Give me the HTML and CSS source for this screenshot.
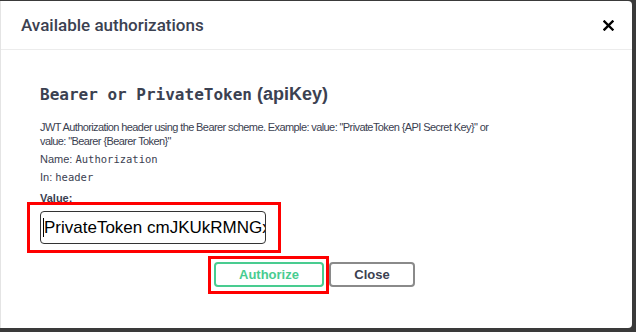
FILE: index.html
```html
<!DOCTYPE html>
<html>
<head>
<meta charset="utf-8">
<link rel="stylesheet" href="styles.css">
</head>
<body>
<div class="modal">
  <div class="modal-header">
    <h3 class="modal-title">Available authorizations</h3>
    <button class="close-x" aria-label="close">
      <svg width="11" height="11" viewBox="0 0 11 11"><path d="M1.5 1.5 L9.5 9.5 M9.5 1.5 L1.5 9.5" stroke="#000" stroke-width="2.4" stroke-linecap="square"/></svg>
    </button>
  </div>
  <div class="modal-body">
    <h4 class="auth-title"><code>Bearer or PrivateToken</code> (apiKey)</h4>
    <p class="desc">JWT Authorization header using the Bearer scheme. Example: value: "PrivateToken {API Secret Key}" or value: "Bearer {Bearer Token}"</p>
    <p class="meta">Name: <code>Authorization</code></p>
    <p class="meta">In: <code>header</code></p>
    <label class="value-label" for="token">Value:</label>
    <div class="hl input-hl">
      <div class="input-wrap"><span class="caret"></span><input id="token" class="input" type="text" value="PrivateToken cmJKUkRMNGxWZ3VqZXNhZQ"></div>
    </div>
    <div class="actions">
      <div class="hl btn-hl"><button class="btn authorize">Authorize</button></div>
      <button class="btn close">Close</button>
    </div>
  </div>
</div>
</body>
</html>
```
FILE: styles.css
```css
html, body { margin: 0; padding: 0; }
body {
  background: #3a3a3a;
  width: 636px;
  height: 332px;
  overflow: hidden;
  font-family: "Liberation Sans", Arial, sans-serif;
  color: #3b4151;
}
.modal {
  margin-top: 1px;
  width: 632px;
  height: 327px;
  background: #fff;
  border-left: 1px solid #e4e4e4;
  border-radius: 0 4px 4px 0;
  box-sizing: border-box;
}
.modal-header {
  height: 48px;
  border-bottom: 1px solid #ececec;
  display: flex;
  align-items: center;
  justify-content: space-between;
  padding: 0 18px 0 20px;
}
.modal-title {
  margin: 0;
  font-family: Roboto, "Liberation Sans", sans-serif;
  font-size: 17px;
  font-weight: 500;
  color: #3b4151;
}
.close-x {
  border: 0;
  background: none;
  padding: 0;
  display: flex;
}
.modal-body {
  padding: 34px 0 0 39px;
}
.auth-title {
  margin: 0;
  font-size: 18px;
  font-weight: bold;
  line-height: 20px;
  font-family: "Liberation Sans", Arial, sans-serif;
  color: #3b4151;
}
.auth-title code {
  font-family: "DejaVu Sans Mono", monospace;
  font-size: 16px;
}
.desc {
  margin: 15px 0 0;
  font-size: 11px;
  line-height: 14px;
  width: 470px;
  letter-spacing: -0.6px;
}
.meta {
  margin: 3px 0 0;
  font-size: 11px;
  line-height: 16px;
}
.meta + .meta {
  margin-top: 2px;
}
.meta code {
  font-family: "DejaVu Sans Mono", monospace;
  font-size: 10.5px;
}
.value-label {
  display: block;
  margin-top: 6px;
  font-size: 11px;
  font-weight: bold;
  line-height: 14px;
}
.hl {
  border: 3px solid #f00;
  display: inline-block;
}
.input-hl {
  margin: -3px 0 0 -13px;
  padding: 6px 12px 6px 10px;
}
.input-wrap {
  position: relative;
  width: 226px;
  height: 33px;
}
.input {
  width: 226px;
  height: 33px;
  border: 1px solid #333;
  border-radius: 4px;
  box-sizing: border-box;
  font-family: "Liberation Sans", Arial, sans-serif;
  font-size: 17px;
  padding: 0 0 0 3px;
  color: #000;
  background: #fff;
  outline: none;
  margin: 0;
  display: block;
}
.caret {
  position: absolute;
  left: 3px;
  top: 7px;
  width: 1px;
  height: 19px;
  background: #000;
  z-index: 1;
}
.actions {
  display: flex;
  align-items: center;
  margin: 3px 0 0 168px;
  gap: 0;
}
.btn-hl {
  padding: 3px 2px 4px 3px;
}
.btn {
  height: 25px;
  border-radius: 4px;
  background: #fff;
  font-family: "Liberation Sans", Arial, sans-serif;
  font-weight: bold;
  font-size: 13px;
  padding: 0;
  box-sizing: border-box;
}
.authorize {
  width: 110px;
  border: 2px solid #49cc90;
  color: #49cc90;
  display: block;
}
.close {
  width: 86px;
  border: 2px solid #8a8a8a;
  color: #3b4151;
  margin-top: -1px;
}
```
